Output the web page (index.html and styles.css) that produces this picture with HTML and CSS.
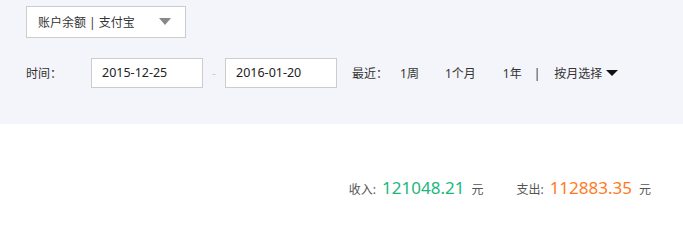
FILE: index.html
```html
<!DOCTYPE html>
<html lang="zh-CN">
  <head>
    <meta charset="UTF-8" />
    <meta name="viewport" content="width=device-width, initial-scale=1.0" />
    <title>账户明细</title>
    <link rel="stylesheet" href="styles.css">
  </head>
  <body>
    <div class="filter-panel">
      <div class="account-select">
        <span>账户余额 | 支付宝</span>
        <i class="arrow-gray"></i>
      </div>
      <div class="date-row">
        <span class="label">时间：</span>
        <div class="date-input">2015-12-25</div>
        <span class="dash">-</span>
        <div class="date-input">2016-01-20</div>
        <span class="label recent">最近：</span>
        <a class="quick week">1周</a>
        <a class="quick month">1个月</a>
        <a class="quick year">1年</a>
        <span class="sep">|</span>
        <a class="quick pick">按月选择<i class="arrow-black"></i></a>
      </div>
    </div>

    <div class="summary">
      <span class="item">收入:<b class="income">121048.21</b>元</span>
      <span class="item">支出:<b class="expense">112883.35</b>元</span>
    </div>
  </body>
</html>
```

FILE: styles.css
```css
* {
  box-sizing: border-box;
  margin: 0;
  padding: 0;
}

body {
  font-family: "Noto Sans", "Noto Sans CJK SC", sans-serif;
  font-size: 12px;
  color: #333;
  background: #fff;
}

.filter-panel {
  height: 124px;
  background: #f4f5fa;
  padding: 6px 26px 0;
}

/* Account select */
.account-select {
  width: 160px;
  height: 32px;
  background: #fff;
  border: 1px solid #ccc;
  display: flex;
  align-items: center;
  justify-content: space-between;
  padding: 0 14px 0 11px;
}

.arrow-gray {
  width: 0;
  height: 0;
  border-left: 6px solid transparent;
  border-right: 6px solid transparent;
  border-top: 7px solid #888;
  margin-top: -1px;
}

/* Date row */
.date-row {
  display: flex;
  align-items: center;
  height: 30px;
  margin-top: 20px;
}

.label {
  width: 65px;
}

.date-input {
  width: 112px;
  height: 30px;
  line-height: 28px;
  background: #fff;
  border: 1px solid #ccc;
  padding-left: 10px;
  font-size: 12.5px;
  color: #222;
}

.dash {
  width: 22px;
  text-align: center;
  color: #ccc;
}

.label.recent {
  width: auto;
  margin-left: 15px;
}

.quick {
  color: #333;
  cursor: pointer;
}

.week {
  margin-left: 12px;
}

.month {
  margin-left: 26px;
}

.year {
  margin-left: 27px;
}

.sep {
  margin: 0 14px 0 12px;
}

.pick {
  display: flex;
  align-items: center;
}

.arrow-black {
  width: 0;
  height: 0;
  border-left: 6px solid transparent;
  border-right: 6px solid transparent;
  border-top: 6px solid #111;
  margin-left: 4px;
}

/* Summary */
.summary {
  display: flex;
  justify-content: flex-end;
  align-items: baseline;
  gap: 33px;
  padding: 52px 32px 0 0;
  color: #555;
}

.summary b {
  font-weight: normal;
  font-size: 17px;
  margin: 0 7px 0 6px;
}

.income {
  color: #1bb77d;
}

.expense {
  color: #ff7a22;
}
```
